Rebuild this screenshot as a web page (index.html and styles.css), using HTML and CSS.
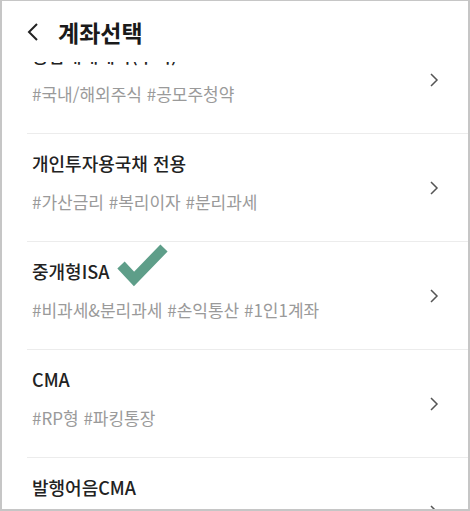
FILE: index.html
```html
<!DOCTYPE html>
<html lang="ko">
<head>
    <meta charset="UTF-8">
    <meta name="viewport" content="width=device-width, initial-scale=1.0">
    <title>계좌선택</title>
    <link rel="stylesheet" href="styles.css">
</head>
<body>
    <div class="screen">
        <header class="top-bar">
            <svg class="back" width="12" height="18" viewBox="0 0 12 18">
                <polyline points="10,1 2,9 10,17" />
            </svg>
            <h1>계좌선택</h1>
        </header>
        <div class="list-view">
            <ul class="account-list">
                <li class="account">
                    <div class="info">
                        <p class="name">종합매매계좌(주식)</p>
                        <p class="tags">#국내/해외주식 #공모주청약</p>
                    </div>
                    <svg class="arrow" width="10" height="14" viewBox="0 0 10 14"><polyline points="2,1 8,7 2,13" /></svg>
                </li>
                <li class="account">
                    <div class="info">
                        <p class="name">개인투자용국채 전용</p>
                        <p class="tags">#가산금리 #복리이자 #분리과세</p>
                    </div>
                    <svg class="arrow" width="10" height="14" viewBox="0 0 10 14"><polyline points="2,1 8,7 2,13" /></svg>
                </li>
                <li class="account">
                    <div class="info">
                        <p class="name">중개형ISA</p>
                        <p class="tags">#비과세&amp;분리과세 #손익통산 #1인1계좌</p>
                    </div>
                    <svg class="arrow" width="10" height="14" viewBox="0 0 10 14"><polyline points="2,1 8,7 2,13" /></svg>
                    <!-- hand-drawn mark on top of the row -->
                    <svg class="check" width="56" height="46" viewBox="0 0 56 46">
                        <polyline points="7,22 20,36 50,5" />
                    </svg>
                </li>
                <li class="account">
                    <div class="info">
                        <p class="name">CMA</p>
                        <p class="tags">#RP형 #파킹통장</p>
                    </div>
                    <svg class="arrow" width="10" height="14" viewBox="0 0 10 14"><polyline points="2,1 8,7 2,13" /></svg>
                </li>
                <li class="account">
                    <div class="info">
                        <p class="name">발행어음CMA</p>
                        <p class="tags">#확정금리 #수시입출금</p>
                    </div>
                    <svg class="arrow" width="10" height="14" viewBox="0 0 10 14"><polyline points="2,1 8,7 2,13" /></svg>
                </li>
            </ul>
        </div>
    </div>
</body>
</html>
```

FILE: styles.css
```css
* {
    box-sizing: border-box;
}

body {
    margin: 0;
    background-color: #ffffff;
    font-family: "Noto Sans CJK KR", "Noto Sans", sans-serif;
    color: #222222;
}

.screen {
    width: 470px;
    height: 511px;
    display: flex;
    flex-direction: column;
    border: 2px solid #c6c6c6;
    border-top-width: 1px;
    overflow: hidden;
    background-color: #ffffff;
}

.top-bar {
    flex: none;
    height: 61px;
    display: flex;
    align-items: center;
    padding-left: 25px;
}

.back polyline {
    fill: none;
    stroke: #222222;
    stroke-width: 2;
}

.top-bar h1 {
    margin: 0 0 0 19px;
    font-size: 23px;
    font-weight: 700;
    line-height: 30px;
    color: #1a1a1a;
}

/* list is scrolled a little, first row sits under the header */
.list-view {
    flex: 1;
    overflow: hidden;
}

.account-list {
    list-style: none;
    margin: -37px 0 0 25px;
    padding: 0;
}

.account {
    position: relative;
    height: 108px;
    display: flex;
    align-items: center;
    border-top: 1px solid #ececec;
    padding: 0 29px 0 5px;
}

.info {
    flex: 1;
    align-self: flex-start;
    padding-top: 17px;
}

.name {
    margin: 0;
    font-size: 18px;
    font-weight: 500;
    line-height: 24px;
    color: #222222;
}

.tags {
    margin: 16px 0 0;
    font-size: 17px;
    line-height: 22px;
    color: #9a9a9a;
}

.arrow polyline {
    fill: none;
    stroke: #555555;
    stroke-width: 1.5;
}

.check {
    position: absolute;
    left: 87px;
    top: 1px;
}

.check polyline {
    fill: none;
    stroke: #5e9e89;
    stroke-width: 10;
    stroke-linecap: butt;
    stroke-linejoin: miter;
}
```
